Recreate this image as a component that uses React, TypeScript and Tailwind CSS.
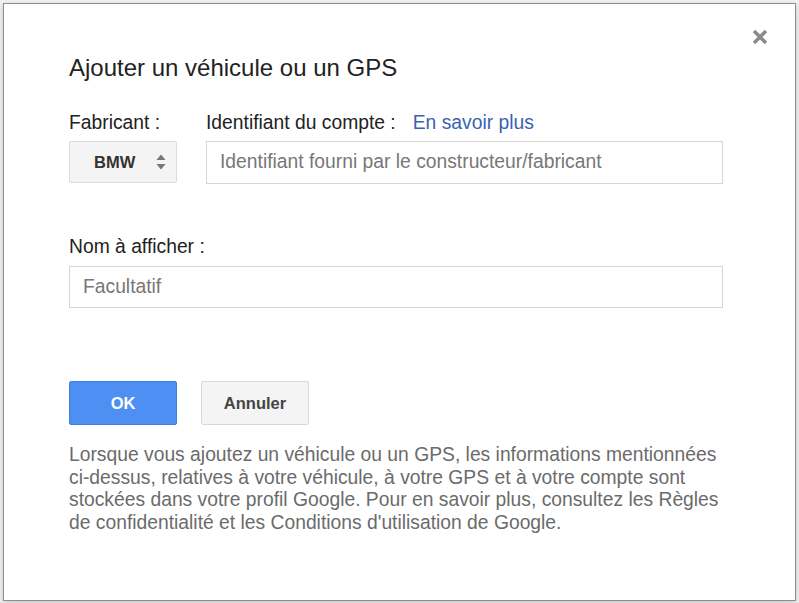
export default function App() {
  return (
    <div
      className="w-[799px] h-[603px] bg-[#f2f2f2] pt-[3px] pl-[3px] overflow-hidden"
      style={{ fontFamily: '"Liberation Sans", Arial, sans-serif' }}
    >
      <div className="relative w-[793px] h-[598px] bg-white border border-[#8f8f8f] shadow-[0_2px_6px_rgba(0,0,0,0.2)] pl-[65px] pr-[72px] pt-[50px]">
        <button className="absolute left-[745px] top-[22px] w-[22px] h-[22px] flex items-center justify-center">
          <svg width="16" height="16" viewBox="0 0 16 16">
            <path d="M2 2 L14 14 M14 2 L2 14" stroke="#8a8a8a" strokeWidth="3.4" strokeLinecap="butt" />
          </svg>
        </button>
        <h1 className="text-[24px] leading-[28px] text-[#222] font-normal">Ajouter un véhicule ou un GPS</h1>

        <div className="mt-[30px] flex gap-[29px]">
          <div className="flex flex-col">
            <div className="text-[19.3px] leading-[22px] text-[#222]">Fabricant :</div>
            <div className="mt-[7px] w-[108px] h-[42px] bg-[#f4f4f4] border border-[#dcdcdc] rounded-[2px] flex items-center pl-[24px] pr-[9px] justify-between">
              <span className="text-[16.5px] font-bold text-[#333]">BMW</span>
              <svg width="12" height="20" viewBox="0 0 12 20">
                <path d="M1.5 8 L6 2.5 L10.5 8 Z" fill="#777" />
                <path d="M1.5 12 L6 17.5 L10.5 12 Z" fill="#777" />
              </svg>
            </div>
          </div>
          <div className="flex flex-col flex-1">
            <div className="text-[19.3px] leading-[22px] text-[#222] flex">
              <span>Identifiant du compte :</span>
              <a className="ml-[17px] text-[#3a62b2]">En savoir plus</a>
            </div>
            <div className="mt-[7px] h-[43px] border border-[#d6d6d6] flex items-center pl-[13px] text-[19.3px] text-[#777]">
              Identifiant fourni par le constructeur/fabricant
            </div>
          </div>
        </div>

        <div className="mt-[52px] text-[19.3px] leading-[22px] text-[#222]">Nom à afficher :</div>
        <div className="mt-[8px] h-[42px] border border-[#d6d6d6] flex items-center pl-[13px] text-[19.3px] text-[#777]">
          Facultatif
        </div>

        <div className="mt-[73px] flex gap-[24px]">
          <button className="w-[108px] h-[44px] rounded-[2px] bg-[#4d8ff3] border border-[#3f7fe6] text-white font-bold text-[16.5px]">
            OK
          </button>
          <button className="w-[108px] h-[44px] rounded-[2px] bg-[#f4f4f4] border border-[#d9d9d9] text-[#444] font-bold text-[16.5px]">
            Annuler
          </button>
        </div>

        <p className="mt-[19px] mr-[-8px] text-[19.3px] leading-[22.7px] text-[#6b6b6b]">
          {"Lorsque vous ajoutez un véhicule ou un GPS, les informations mentionnées ci-\u2060dessus, relatives à votre véhicule, à votre GPS et à votre compte sont stockées dans votre profil Google. Pour en savoir plus, consultez les Règles de confidentialité et les Conditions d'utilisation de Google."}
        </p>
      </div>
    </div>
  );
}
